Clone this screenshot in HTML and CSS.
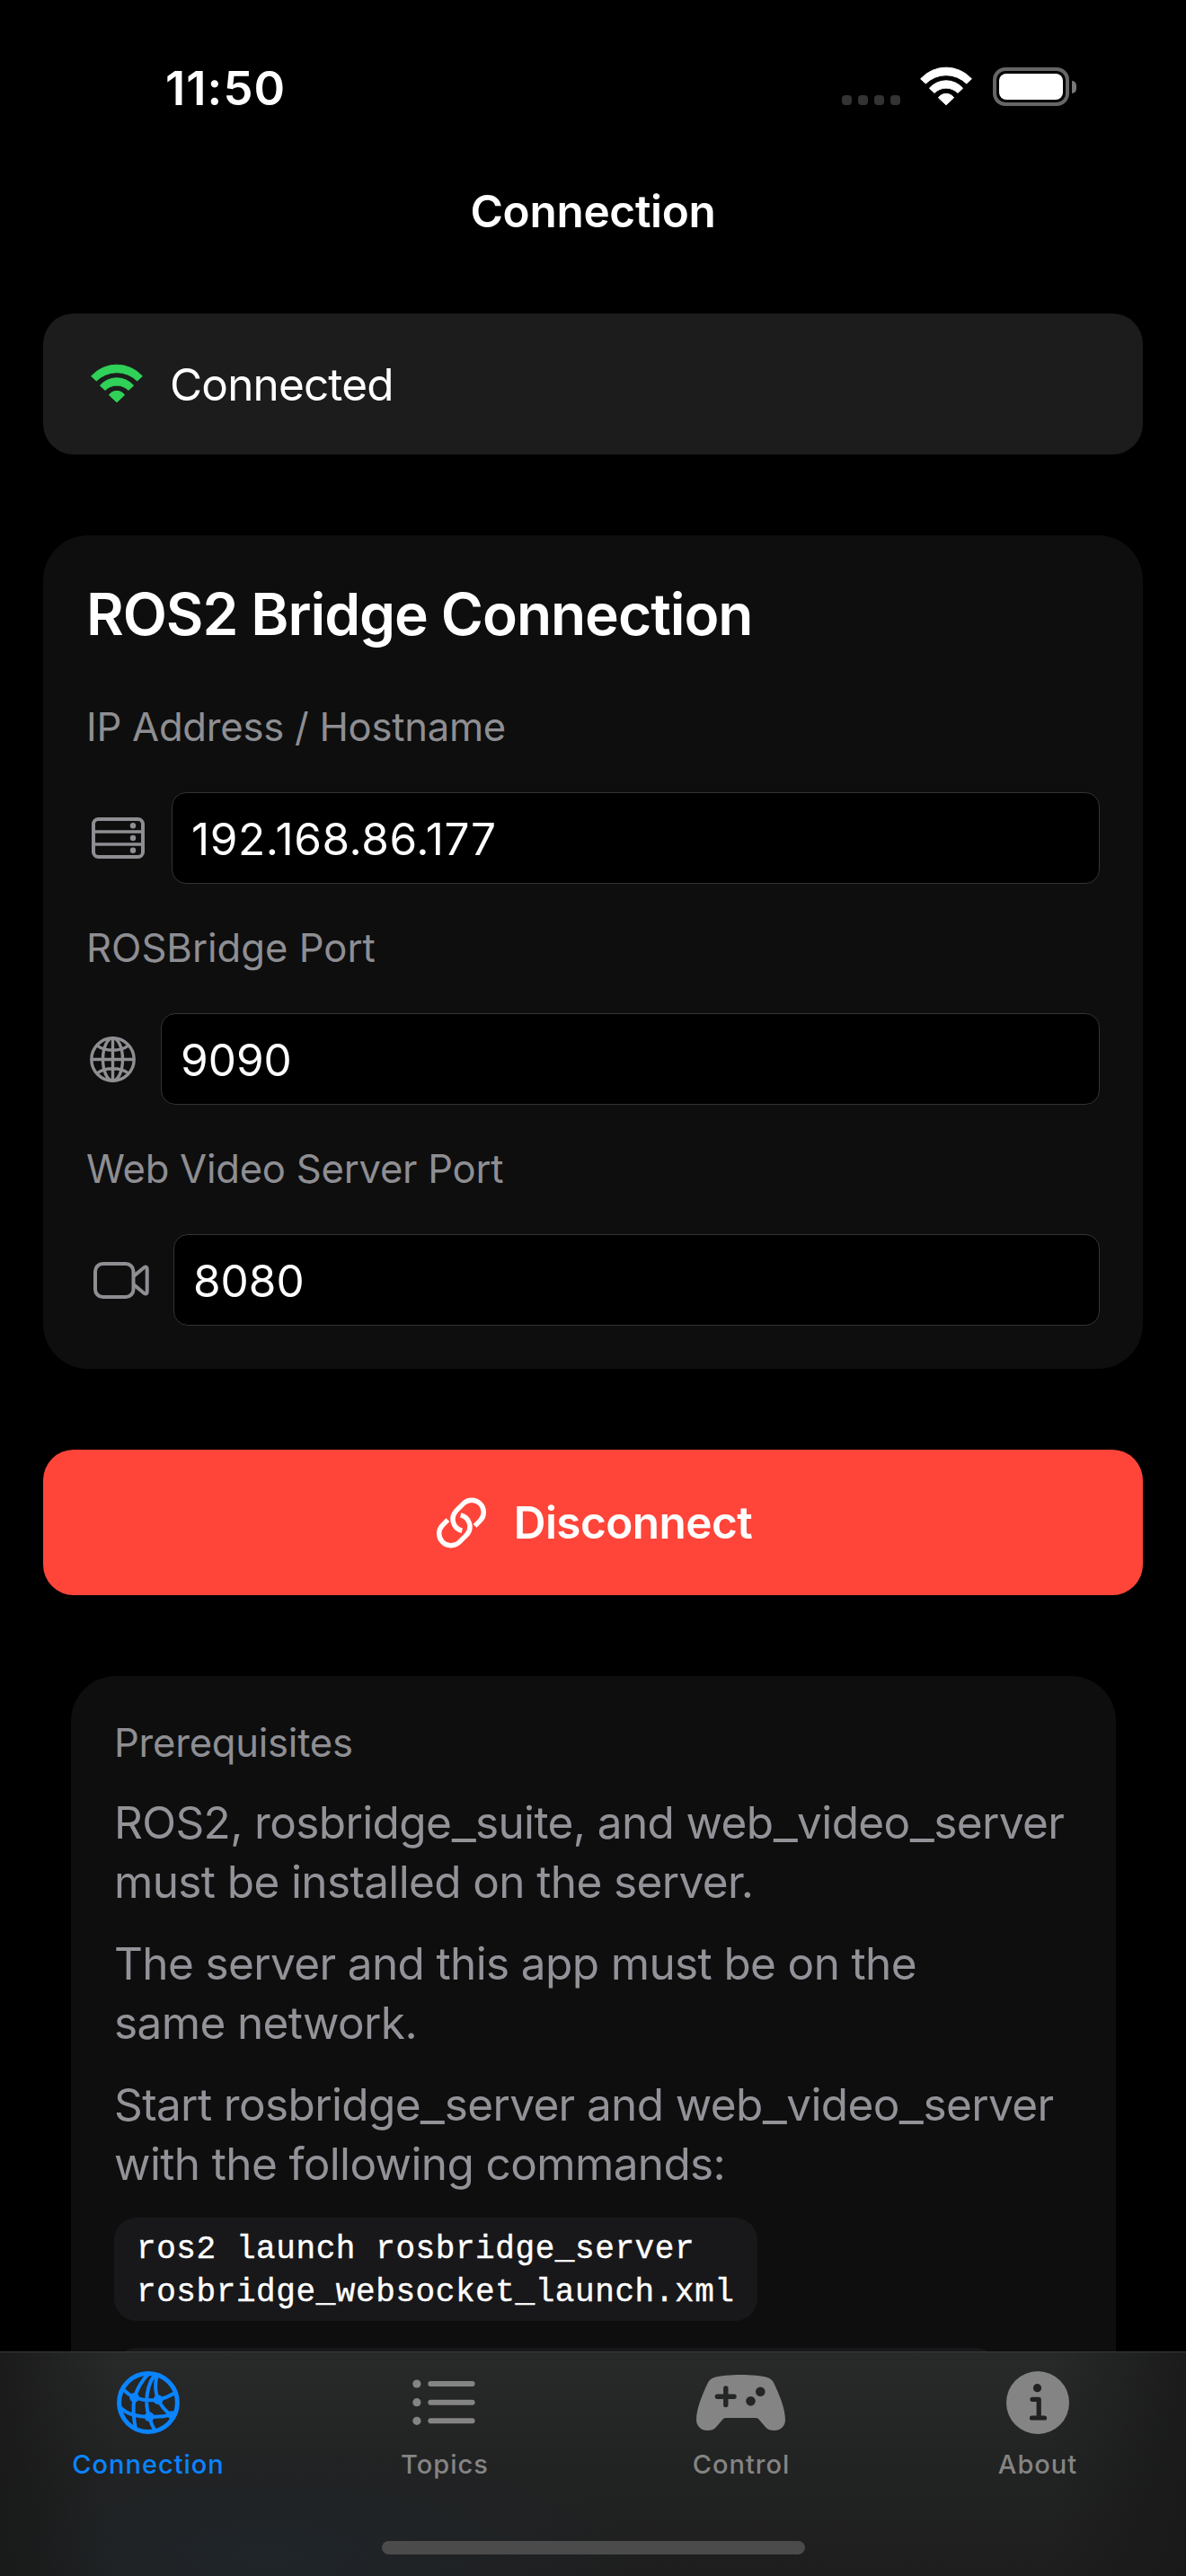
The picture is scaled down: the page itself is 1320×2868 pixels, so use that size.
FILE: index.html
```html
<!DOCTYPE html>
<html lang="en">
<head>
<meta charset="utf-8">
<title>Connection</title>
<link rel="stylesheet" href="styles.css">
</head>
<body>
<div class="screen">
  <header class="status-bar">
    <span class="time">11:50</span>
    <div class="indicators">
      <div class="signal"><i></i><i></i><i></i><i></i></div>
      <svg class="wifi" width="58" height="43" viewBox="0 0 58 43"><g fill="currentColor" stroke="currentColor" stroke-width="1" stroke-linejoin="round"><path d="M.6 12.8A38.2 38.2 0 0 1 57.4 12.8L51.7 18A32.4 32.4 0 0 0 6.3 18Z"/><path d="M10.4 23.2A24.8 24.8 0 0 1 47.6 23.2L42 28.4A18.6 18.6 0 0 0 16 28.4Z"/><path d="M20.4 33.8A10.5 10.5 0 0 1 37.6 33.8L29 41.8Z"/></g></svg>
      <div class="battery"><div class="battery-body"><div class="battery-level"></div></div><div class="battery-cap"></div></div>
    </div>
  </header>
  <div class="nav"><h1>Connection</h1></div>

  <main>
    <section class="state">
      <svg width="58" height="43" viewBox="0 0 58 43"><g fill="currentColor" stroke="currentColor" stroke-width="1" stroke-linejoin="round"><path d="M.6 12.8A38.2 38.2 0 0 1 57.4 12.8L51.7 18A32.4 32.4 0 0 0 6.3 18Z"/><path d="M10.4 23.2A24.8 24.8 0 0 1 47.6 23.2L42 28.4A18.6 18.6 0 0 0 16 28.4Z"/><path d="M20.4 33.8A10.5 10.5 0 0 1 37.6 33.8L29 41.8Z"/></g></svg>
      <span class="state-text">Connected</span>
    </section>

    <section class="card">
      <h2>ROS2 Bridge Connection</h2>
      <div class="label">IP Address / Hostname</div>
      <div class="row host">
        <svg width="59" height="46" viewBox="0 0 59 46" fill="none" stroke="currentColor" stroke-width="4"><rect x="2" y="2" width="55" height="42" rx="5.5"/><path d="M2 16H57M2 30H57" stroke-width="3.5"/><g fill="currentColor" stroke="none"><circle cx="46" cy="9.2" r="3.2"/><circle cx="46" cy="23" r="3.2"/><circle cx="46" cy="36.8" r="3.2"/></g></svg>
        <div class="field">192.168.86.177</div>
      </div>
      <div class="label bridge">ROSBridge Port</div>
      <div class="row port">
        <svg width="51" height="51" viewBox="0 0 51 51" fill="none" stroke="currentColor" stroke-width="3.4"><circle cx="25.5" cy="25.5" r="23.7"/><ellipse cx="25.5" cy="25.5" rx="11" ry="23.7"/><path d="M25.5 2V49M2 25.5H49M8 10Q14.5 15.2 25.5 15.2T43 10M8 41Q14.5 35.8 25.5 35.8T43 41"/></svg>
        <div class="field">9090</div>
      </div>
      <div class="label">Web Video Server Port</div>
      <div class="row video">
        <svg width="62" height="41" viewBox="0 0 62 41" fill="none" stroke="currentColor" stroke-width="4" stroke-linejoin="round"><rect x="2" y="2" width="42.5" height="37" rx="8.5"/><path d="M45 15.6L56.3 6.3Q59.7 4.3 59.7 8V33Q59.7 36.7 56.3 34.7L45 25.4"/></svg>
        <div class="field">8080</div>
      </div>
    </section>

    <div class="button">
      <svg width="55" height="55" viewBox="0 0 55 55" fill="none" stroke="currentColor" stroke-width="5.4"><path d="M42.6 30.8L48.7 24.7A13.3 13.3 0 0 0 29.9 5.9L21.9 13.9A13.3 13.3 0 0 0 28.3 36.2"/><path d="M12.4 24.2L6.3 30.3A13.3 13.3 0 0 0 25.1 49.1L33.1 41.1A13.3 13.3 0 0 0 26.7 18.8"/></svg>
      <span>Disconnect</span>
    </div>

    <section class="card notes">
      <div class="label">Prerequisites</div>
      <p class="p1">ROS2, rosbridge<span class="u">_</span>suite, and web<span class="u">_</span>video<span class="u">_</span>server<br>must be installed on the server.</p>
      <p>The server and this app must be on the<br>same network.</p>
      <p>Start rosbridge<span class="u">_</span>server and web<span class="u">_</span>video<span class="u">_</span>server<br>with the following commands:</p>
      <pre class="code">ros2 launch rosbridge_server
rosbridge_websocket_launch.xml</pre>
      <div class="code next"></div>
    </section>
  </main>

  <nav class="tabs">
    <div class="tab active">
      <svg width="70" height="70" viewBox="0 0 70 70" fill="none" stroke="currentColor" stroke-width="4"><circle cx="35" cy="35" r="32.4" stroke-width="5"/><path d="M6.5 20Q13 26 19.6 29.3Q33 33.5 46.1 31.7Q56 29.5 65 24M3.4 40Q10 46.5 19 48.7Q28 51 36.2 50.7Q50 51.5 60 48.5Q64 47 67 44M34.8 3.5Q25 13 19.6 29.3Q17 46 21 64M42 4.3Q33.4 16 33.2 34Q33.5 45 36.2 50.7Q38.5 60 43 67M44.6 5Q41 19 46.1 31.7Q50 41 61 49.5"/><g fill="currentColor" stroke="none"><circle cx="19.6" cy="29.3" r="5.4"/><circle cx="46.1" cy="31.7" r="5.4"/><circle cx="36.2" cy="50.7" r="5.4"/><circle cx="61" cy="48.8" r="4.6"/></g></svg>
      <span>Connection</span>
    </div>
    <div class="tab">
      <svg width="70" height="70" viewBox="0 0 70 70" fill="none" stroke="currentColor" stroke-width="6" stroke-linecap="round"><path d="M19.3 14H65.6M19.3 34.7H65.6M19.3 55.3H65.6"/><g fill="currentColor" stroke="none"><circle cx="3.9" cy="14" r="4.6"/><circle cx="3.9" cy="34.7" r="4.6"/><circle cx="3.9" cy="55.3" r="4.6"/></g></svg>
      <span>Topics</span>
    </div>
    <div class="tab">
      <svg width="100" height="70" viewBox="0 -4 100 70"><path fill="currentColor" d="M18.5 3.4C26 .8 38 0 49.5 0S73 .8 80.5 3.4C83 4.5 85 6.3 86.2 9C92 21.5 98.8 37 99 50C99 57.5 93.5 62 86.5 62C82.5 62 79.5 61 76.8 58L69.5 49.5Q68.5 48 66.5 48H32.5Q30.5 48 29.5 49.5L22.200 58C19.5 61 16.5 62 12.5 62C5.5 62 0 57.5 0 50C.2 37 7 21.5 12.8 9C14 6.3 16 4.5 18.5 3.4Z"/><g fill="#242525"><path d="M23.4 24.3H42M32.8 15V33.6" stroke="#242525" stroke-width="5.4" stroke-linecap="round"/><circle cx="71.3" cy="18.7" r="5.3"/><circle cx="60.5" cy="29.3" r="5.3"/></g></svg>
      <span>Control</span>
    </div>
    <div class="tab">
      <svg width="70" height="70" viewBox="0 0 70 70"><circle cx="35" cy="35" r="35" fill="currentColor"/><circle cx="34.5" cy="18.7" r="4.6" fill="#202121"/><path d="M29 31.3H36.2V52M28.5 52H42.5" fill="none" stroke="#202121" stroke-width="5.2" stroke-linecap="round" stroke-linejoin="round"/></svg>
      <span>About</span>
    </div>
    <div class="home"></div>
  </nav>
</div>
</body>
</html>
```
FILE: styles.css
```css
* { box-sizing: border-box; }
body { margin: 0; background: #000; }
h1, h2, p, pre { margin: 0; }
svg { display: block; flex: none; overflow: visible; }

.screen {
  position: relative;
  width: 1320px;
  height: 2868px;
  overflow: hidden;
  background: #000;
  color: #fff;
  font-family: Inter, "Liberation Sans", sans-serif;
  font-size: 49.5px;
  line-height: 60px;
  white-space: nowrap;
}

.status-bar {
  display: flex;
  justify-content: space-between;
  height: 162px;
  padding: 68px 122px 0 184px;
}
.time { font-size: 52.5px; font-weight: 600; letter-spacing: 1.1px; }
.indicators { display: flex; padding-top: 7px; height: 50px; }
.signal { display: flex; gap: 7px; padding-top: 31px; margin-right: 22px; }
.signal i { width: 11px; height: 11px; border-radius: 4px; background: #333; }
.wifi { margin-right: 23px; }
.battery { display: flex; align-items: flex-start; gap: 3px; }
.battery-body { width: 85px; height: 43px; border: 4px solid #666; border-radius: 14px; padding: 3px; }
.battery-level { height: 29px; border-radius: 8px; background: #fff; }
.battery-cap { width: 5px; height: 14px; margin-top: 15px; border-radius: 0 7px 7px 0 / 0 7px 7px 0; background: #777; }

.nav { height: 132px; padding-top: 43px; text-align: center; }
h1 { font-size: 49.5px; font-weight: 600; line-height: 60px; letter-spacing: -0.3px; }

main { padding: 55px 48px 0; }
.state {
  display: flex;
  align-items: center;
  gap: 30px;
  height: 157px;
  padding-left: 53px;
  border-radius: 34px;
  background: #1c1c1c;
}
.state svg { color: #30d158; }
.state-text { letter-spacing: -0.85px; }

.card { margin-top: 90px; padding: 48px; border-radius: 50px; background: #0e0e0e; }
h2 { margin-bottom: 59px; font-size: 64px; font-weight: 600; line-height: 80px; letter-spacing: -1.05px; }
.label { font-size: 43.6px; line-height: 54px; letter-spacing: -0.25px; color: #8e8e93; }
.bridge { letter-spacing: 0; }
.row { display: flex; align-items: center; height: 102px; margin: 45px 0; color: #8e8e93; }
.row:last-child { margin-bottom: 0; }
.host { padding-left: 6px; gap: 30px; }
.host .field { letter-spacing: 0.6px; }
.port { padding-left: 4px; gap: 28px; }
.video { padding-left: 8px; gap: 27px; }
.field {
  flex: 1;
  height: 102px;
  padding-left: 21px;
  border: 1px solid #333;
  border-radius: 16px;
  background: #000;
  color: #fff;
  line-height: 102px;
}

.button {
  display: flex;
  align-items: center;
  justify-content: center;
  gap: 31px;
  height: 162px;
  margin-top: 90px;
  padding-left: 3px;
  border-radius: 34px;
  background: #ff453a;
  font-weight: 600;
  letter-spacing: -0.55px;
}

.notes { height: 1100px; margin: 90px 30px 0 31px; }
.notes p { margin-bottom: 25px; line-height: 66px; letter-spacing: -0.63px; color: #929298; }
.notes .p1 { margin-top: 28px; }
/* widened underscore in identifiers */
.u { display: inline-block; margin: 0 2.4px; transform: scaleX(1.2); }
.code {
  width: 716px;
  height: 115px;
  margin: 27px 0 30px;
  padding: 12px 0 0 25px;
  border-radius: 25px;
  background: #18181a;
  font: 36px/48px "Liberation Mono", monospace;
  letter-spacing: 0.58px;
  -webkit-text-stroke: 0.4px #fff;
}
.next { width: 984px; }

.tabs {
  position: absolute;
  left: 0;
  right: 0;
  bottom: 0;
  display: grid;
  grid-template-columns: repeat(4, 330px);
  height: 250px;
  padding-top: 21px;
  border-top: 1px solid #3a3a3b;
  background:
    linear-gradient(90deg, rgba(22, 23, 22, .75), transparent 130px, transparent 1170px, rgba(22, 23, 22, .75)),
    radial-gradient(ellipse 420px 130px at 300px 230px, rgba(32, 39, 45, .8), transparent),
    linear-gradient(#282929, #212222 55%, #1e1e1e);
}
.tab { display: flex; flex-direction: column; align-items: center; color: #848484; }
.tab span { margin-top: 16px; font-size: 29px; font-weight: 500; line-height: 36px; letter-spacing: 1px; }
.active { color: #0a84ff; }
.home {
  position: absolute;
  left: 425px;
  bottom: 24px;
  width: 471px;
  height: 15px;
  border-radius: 8px;
  background: #4b4b4b;
}
```
